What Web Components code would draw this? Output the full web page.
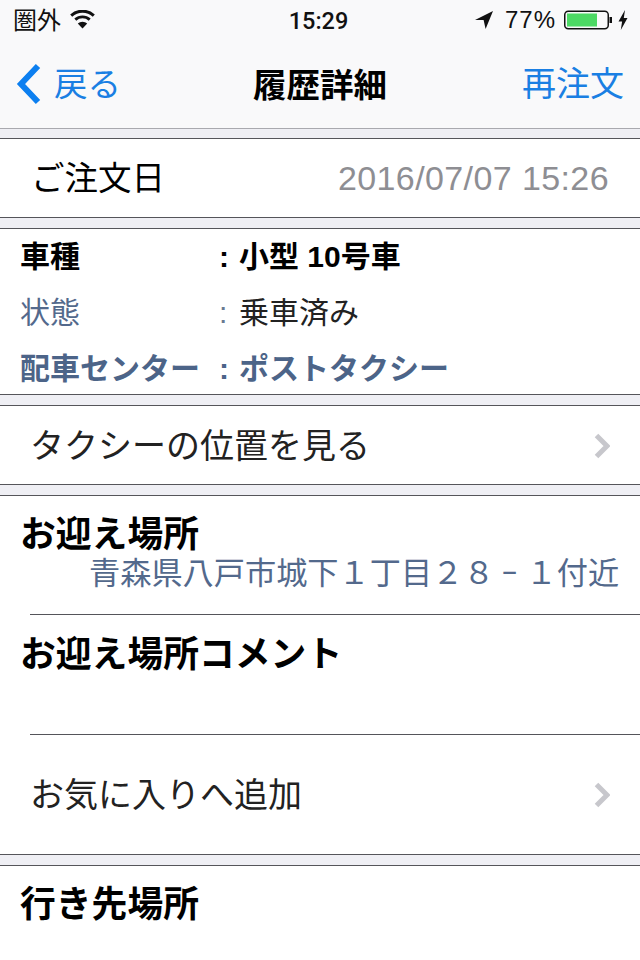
<!DOCTYPE html>
<html lang="ja">
<head>
<meta charset="utf-8">
<title>履歴詳細</title>
<style>
  html, body { margin: 0; padding: 0; background: #efeff4; }
  body {
    width: 640px;
    height: 960px;
    overflow: hidden;
    font-family: "Liberation Sans", "Noto Sans CJK JP", sans-serif;
    color: #000;
  }
  .dash { display: inline-block; transform: scaleX(.55); }
  .first { margin-top: 9px; }
  .details { display: grid; grid-auto-rows: 52px; gap: 4px; padding-bottom: 1px; }
</style>
</head>
<body>
  <status-bar></status-bar>
  <nav-bar back="戻る" title="履歴詳細" action="再注文"></nav-bar>

  <table-group class="first">
    <order-date label="ご注文日" value="2016/07/07 15:26"></order-date>
  </table-group>

  <table-group>
    <div class="details">
      <info-row kind="bold" label="車種" value="小型 10号車"></info-row>
      <info-row kind="plain" label="状態" value="乗車済み"></info-row>
      <info-row kind="accent" label="配車センター" value="ポストタクシー"></info-row>
    </div>
  </table-group>

  <table-group>
    <link-row height="78">タクシーの位置を見る</link-row>
  </table-group>

  <table-group>
    <place-block title="お迎え場所" height="118">青森県八戸市城下１丁目２８<span class="dash">－</span>１付近</place-block>
    <place-block title="お迎え場所コメント" height="120" inset></place-block>
    <link-row height="120" inset>お気に入りへ追加</link-row>
  </table-group>

  <table-group>
    <place-block title="行き先場所" height="120"></place-block>
  </table-group>

<script>
  class StatusBar extends HTMLElement {
    constructor() {
      super();
      const shadow = this.attachShadow({ mode: 'open' });
      shadow.innerHTML = `
        <style>
          :host {
            display: grid;
            grid-template-columns: 1fr auto 1fr;
            align-items: center;
            height: 40px;
            padding: 0 12px 0 13px;
            box-sizing: border-box;
            background: #f9f9fa;
            font-size: 24px;
            color: #111;
          }
          .left, .right { display: flex; align-items: center; }
          .right { justify-content: flex-end; }
          .carrier { padding-bottom: 4px; }
          .wifi { margin-left: 9px; margin-top: -2px; }
          .time { font-family: Roboto, "Liberation Sans", sans-serif; font-weight: 500; font-size: 23.5px; padding-top: 1px; margin-right: 4px; }
          .pct { margin: 0 8px 0 12px; letter-spacing: 1px; font-weight: 400; }
          .bat { display: block; }
          .bolt { margin-left: 6px; }
        </style>
        <div class="left">
          <span class="carrier">圏外</span>
          <svg class="wifi" width="25" height="19" viewBox="0 0 25 19">
            <path d="M12.5 18.5 7.8 13.6a6.8 6.8 0 0 1 9.4 0Z" fill="#111"/>
            <path d="M5.3 9.6a10.6 10.6 0 0 1 14.4 0" fill="none" stroke="#111" stroke-width="2.8"/>
            <path d="M1.2 5.6a16.6 16.6 0 0 1 22.6 0" fill="none" stroke="#111" stroke-width="3"/>
          </svg>
        </div>
        <div class="time">15:29</div>
        <div class="right">
          <svg width="18" height="18" viewBox="0 0 18 18"><path d="M18 0 0 9h8.6l2 9Z" fill="#111"/></svg>
          <span class="pct">77%</span>
          <svg class="bat" width="48" height="20" viewBox="0 0 48 20">
            <rect x=".75" y="1.25" width="43.5" height="17.5" rx="3.5" fill="none" stroke="#111" stroke-width="1.5"/>
            <rect x="3" y="3.5" width="30" height="13" fill="#4cd964"/>
            <path d="M45.5 7h2.5v6h-2.5Z" fill="#111"/>
          </svg>
          <svg class="bolt" width="10" height="20" viewBox="0 0 10 20"><path d="M7 0 .5 11.5h3.6L2.8 20 9.5 8H5.8Z" fill="#111"/></svg>
        </div>
      `;
    }
  }

  class NavBar extends HTMLElement {
    constructor() {
      super();
      const shadow = this.attachShadow({ mode: 'open' });
      shadow.innerHTML = `
        <style>
          :host {
            display: grid;
            grid-template-columns: 1fr auto 1fr;
            align-items: center;
            height: 89px;
            padding: 0 16px 3px 16px;
            box-sizing: border-box;
            background: #f9f9fa;
            border-bottom: 1px solid #a9a9ae;
          }
          .back { display: flex; align-items: center; gap: 12px; color: #1a7fe3; font-size: 33.5px; }
          .back svg { margin-top: 2px; }
          .back span { padding-bottom: 3px; }
          .title { font-size: 33.5px; font-weight: 700; color: #000; padding-bottom: 1px; }
          .action { justify-self: end; color: #1a7fe3; font-size: 34px; padding-bottom: 2px; }
        </style>
        <div class="back">
          <svg width="26" height="42" viewBox="0 0 26 42">
            <path d="M22 3 5 21l17 18" fill="none" stroke="#0c7ff0" stroke-width="6"/>
          </svg>
          <span></span>
        </div>
        <div class="title"></div>
        <div class="action"></div>
      `;
      shadow.querySelector('.back span').textContent = this.getAttribute('back');
      shadow.querySelector('.title').textContent = this.getAttribute('title');
      shadow.querySelector('.action').textContent = this.getAttribute('action');
    }
  }

  class TableGroup extends HTMLElement {
    constructor() {
      super();
      const shadow = this.attachShadow({ mode: 'open' });
      shadow.innerHTML = `
        <style>
          :host {
            display: block;
            margin-top: 10px;
            background: #fff;
            border-top: 1px solid #55555a;
            border-bottom: 1px solid #55555a;
          }
        </style>
        <slot></slot>
      `;
    }
  }

  class OrderDate extends HTMLElement {
    constructor() {
      super();
      const shadow = this.attachShadow({ mode: 'open' });
      shadow.innerHTML = `
        <style>
          :host {
            display: flex;
            align-items: center;
            justify-content: space-between;
            height: 78px;
            padding: 0 31px 0 31px;
          }
          .label { font-size: 33.5px; padding-bottom: 6px; }
          .value { font-size: 34px; letter-spacing: .4px; color: #8e8e93; }
        </style>
        <span class="label"></span>
        <span class="value"></span>
      `;
      shadow.querySelector('.label').textContent = this.getAttribute('label');
      shadow.querySelector('.value').textContent = this.getAttribute('value');
    }
  }

  class InfoRow extends HTMLElement {
    constructor() {
      super();
      const shadow = this.attachShadow({ mode: 'open' });
      shadow.innerHTML = `
        <style>
          :host {
            display: grid;
            grid-template-columns: 199px 1fr;
            align-items: center;
            box-sizing: border-box;
            padding: 4px 0 0 20px;
            font-size: 30px;
            line-height: 40px;
          }
          :host([kind="bold"]) { font-weight: 700; color: #000; }
          :host([kind="plain"]) { color: #222; }
          :host([kind="plain"]) .label { color: #53698c; }
          :host([kind="plain"]) .colon { color: #6a7a90; }
          :host([kind="accent"]) { font-weight: 700; color: #4c6488; }
          .colon { display: inline-block; width: 20px; }
        </style>
        <span class="label"></span>
        <span><span class="colon">:</span><span class="value"></span></span>
      `;
      shadow.querySelector('.label').textContent = this.getAttribute('label');
      shadow.querySelector('.value').textContent = this.getAttribute('value');
    }
  }

  class LinkRow extends HTMLElement {
    constructor() {
      super();
      const shadow = this.attachShadow({ mode: 'open' });
      shadow.innerHTML = `
        <style>
          :host {
            display: flex;
            align-items: center;
            justify-content: space-between;
            position: relative;
            padding: 0 30px 0 30px;
            font-size: 34px;
            color: #222;
            box-sizing: border-box;
          }
          :host([inset])::before {
            content: "";
            position: absolute;
            top: 0;
            left: 30px;
            right: 0;
            height: 1px;
            background: #55555a;
          }
          .text { padding-bottom: 4px; }
          svg { display: block; margin-top: 2px; }
        </style>
        <span class="text"><slot></slot></span>
        <svg width="16" height="26" viewBox="0 0 16 26">
          <path d="M2.5 2.5 13 13 2.5 23.5" fill="none" stroke="#c7c7cc" stroke-width="5"/>
        </svg>
      `;
      this.style.height = this.getAttribute('height') + 'px';
    }
  }

  class PlaceBlock extends HTMLElement {
    constructor() {
      super();
      const shadow = this.attachShadow({ mode: 'open' });
      shadow.innerHTML = `
        <style>
          :host {
            display: block;
            box-sizing: border-box;
            position: relative;
            padding-top: 19px;
          }
          :host([inset]) { padding-top: 21px; }
          :host([inset])::before {
            content: "";
            position: absolute;
            top: 0;
            left: 30px;
            right: 0;
            height: 1px;
            background: #55555a;
          }
          .title { font-size: 35.8px; font-weight: 700; line-height: 41px; padding-left: 20px; color: #000; }
          .body { font-size: 31.2px; line-height: 36px; color: #53698c; padding-left: 89px; white-space: nowrap; }
        </style>
        <div class="title"></div>
        <div class="body"><slot></slot></div>
      `;
      shadow.querySelector('.title').textContent = this.getAttribute('title');
      this.style.height = this.getAttribute('height') + 'px';
    }
  }

  customElements.define('status-bar', StatusBar);
  customElements.define('nav-bar', NavBar);
  customElements.define('table-group', TableGroup);
  customElements.define('order-date', OrderDate);
  customElements.define('info-row', InfoRow);
  customElements.define('link-row', LinkRow);
  customElements.define('place-block', PlaceBlock);
</script>
</body>
</html>
